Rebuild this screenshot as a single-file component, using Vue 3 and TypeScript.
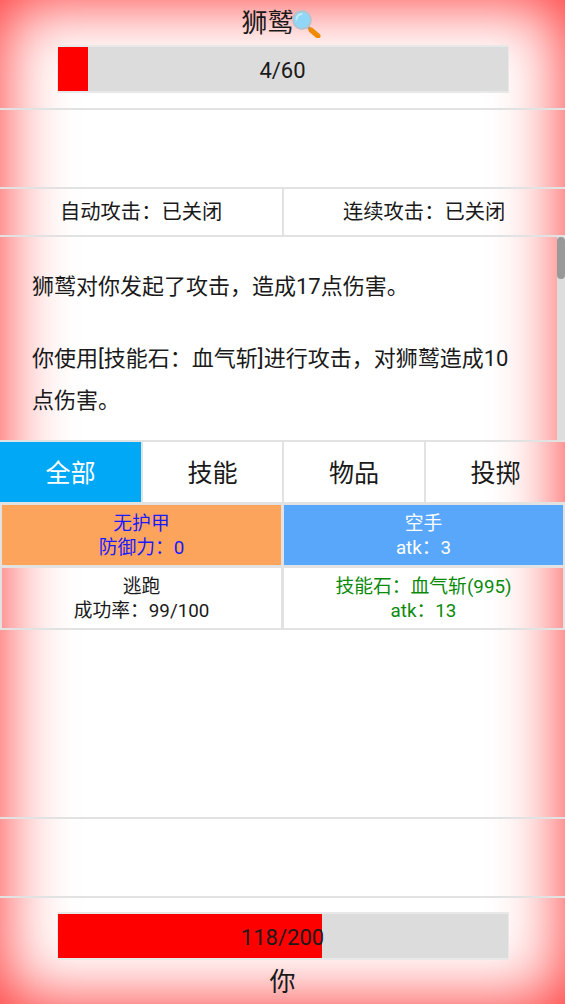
<script setup lang="ts">
interface Cell { l1: string; l2: string; cls: string }
const tabs: string[] = ['全部', '技能', '物品', '投掷']
const cells: Cell[] = [
  { l1: '无护甲', l2: '防御力：0', cls: 'armor' },
  { l1: '空手', l2: 'atk：3', cls: 'weapon' },
  { l1: '逃跑', l2: '成功率：99/100', cls: 'plain' },
  { l1: '技能石：血气斩(995)', l2: 'atk：13', cls: 'skill' },
]
</script>

<template>
  <div class="page">
    <header class="head">
      <div class="name">狮鹫<svg class="glass" viewBox="0 0 30 30" aria-hidden="true">
        <path d="M15 18 L19 22" stroke="#9a9a9a" stroke-width="3" />
        <path d="M19 22 L26 28" stroke="#f08a00" stroke-width="5" stroke-linecap="round" />
        <circle cx="10" cy="12" r="9" fill="#8fd6f7" stroke="#b9c2c8" stroke-width="1.8" />
        <path d="M4.5 11.5 A6 6 0 0 1 9.5 6" fill="none" stroke="#c4ecfc" stroke-width="2" stroke-linecap="round" />
      </svg></div>
      <div class="bar"><div class="fill" style="width: 6.67%"></div><span class="val">4/60</span></div>
    </header>
    <div class="blank first"></div>
    <div class="toggles">
      <div class="tog left">自动攻击：已关闭</div>
      <div class="tog right">连续攻击：已关闭</div>
    </div>
    <div class="log">
      <p>狮鹫对你发起了攻击，造成17点伤害。</p>
      <p>你使用[技能石：血气斩]进行攻击，对狮鹫造成10点伤害。</p>
      <div class="thumb"></div>
    </div>
    <nav class="tabs">
      <div v-for="(t, i) in tabs" :key="t" class="tab" :class="{ on: i === 0 }">{{ t }}</div>
    </nav>
    <div class="cells">
      <div v-for="c in cells" :key="c.l1" class="cell" :class="c.cls">
        <div>{{ c.l1 }}</div>
        <div>{{ c.l2 }}</div>
      </div>
    </div>
    <div class="space"></div>
    <div class="blank second"></div>
    <footer class="foot">
      <div class="bar"><div class="fill" style="width: 58.8%"></div><span class="val">118/200</span></div>
      <div class="name you">你</div>
    </footer>
  </div>
</template>

<style>
html, body { margin: 0; padding: 0; background: #fff; }
</style>

<style scoped>
.page {
  position: relative;
  width: 565px;
  height: 1004px;
  overflow: hidden;
  display: flex;
  flex-direction: column;
  background: #fff;
  box-shadow: inset 0 0 68px rgba(255, 0, 0, 0.85);
  color: #1a1a1a;
  font-family: Roboto, "Noto Sans CJK SC", sans-serif;
  font-size: 18.8px;
}
.head { height: 108px; display: flex; flex-direction: column; align-items: center; flex: none; }
.name { height: 45px; line-height: 46px; font-size: 26px; display: flex; align-items: center; justify-content: center; }
.glass { width: 30px; height: 30px; margin-top: 1px; margin-left: -2px; margin-right: 2px; }
.bar {
  position: relative;
  box-sizing: border-box;
  width: 452px;
  height: 48px;
  border: 2px solid #e8e8e8;
  border-left-width: 1px;
  border-right-width: 1px;
  background: #dcdcdc;
}
.fill { height: 100%; background: #f00; }
.val {
  position: absolute;
  inset: 0;
  padding-top: 2px;
  display: flex;
  align-items: center;
  justify-content: center;
  font-size: 22px;
}
.blank { flex: none; box-sizing: border-box; border-top: 2px solid #e2e2e2; height: 79px; }
.toggles {
  flex: none;
  display: grid;
  grid-template-columns: 284px 1fr;
  height: 50px;
  box-sizing: border-box;
  border-top: 2px solid #e2e2e2;
  border-bottom: 2px solid #e2e2e2;
  font-size: 20.3px;
  line-height: 47px;
}
.tog.left { border-right: 2px solid #e2e2e2; padding-left: 60px; box-sizing: border-box; }
.tog.right { padding-left: 59px; }
.log { position: relative; flex: none; height: 203px; box-sizing: border-box; padding: 29px 36px 0 32px; font-size: 22px; line-height: 41.5px; }
.log p { margin: 0 0 30.5px; }
.thumb { position: absolute; right: 0; top: 0; width: 8px; height: 100%; background: #ddd; }
.thumb::before { content: ""; position: absolute; left: 0; top: 0; width: 8px; height: 42px; border-radius: 4px; background: #999; }
.tabs { flex: none; display: grid; grid-template-columns: 141px 141px 142px 141px; height: 63px; box-sizing: border-box; border-top: 2px solid #e2e2e2; border-bottom: 1px solid #e2e2e2; }
.tab { display: flex; align-items: center; justify-content: center; padding-bottom: 3px; font-size: 25.1px; box-sizing: border-box; border-left: 2px solid #e2e2e2; }
.tab:first-child { border-left: 0; }
.tab.on { background: #00a8f5; color: #fff; }
.cells { flex: none; display: grid; grid-template-columns: 283px 282px; }
.cell { box-sizing: border-box; height: 64px; border: 2px solid #e2e2e2; display: flex; flex-direction: column; justify-content: center; align-items: center; padding-top: 2px; font-size: 18.8px; line-height: 24.5px; }
.cell:nth-child(even) { border-left-width: 1px; }
.cell:nth-child(n + 3) { height: 63px; border-top-width: 1px; }
.armor { background: #fda45c; color: #1a1aff; }
.weapon { background: #58a7fb; color: #fff; }
.skill { color: #0a8a0a; }
.space { flex: none; height: 186.5px; }
.second { height: 79px; }
.foot { flex: none; border-top: 2px solid #e2e2e2; padding-top: 14.5px; display: flex; flex-direction: column; align-items: center; }
.you { height: 44px; line-height: 44px; }
</style>
